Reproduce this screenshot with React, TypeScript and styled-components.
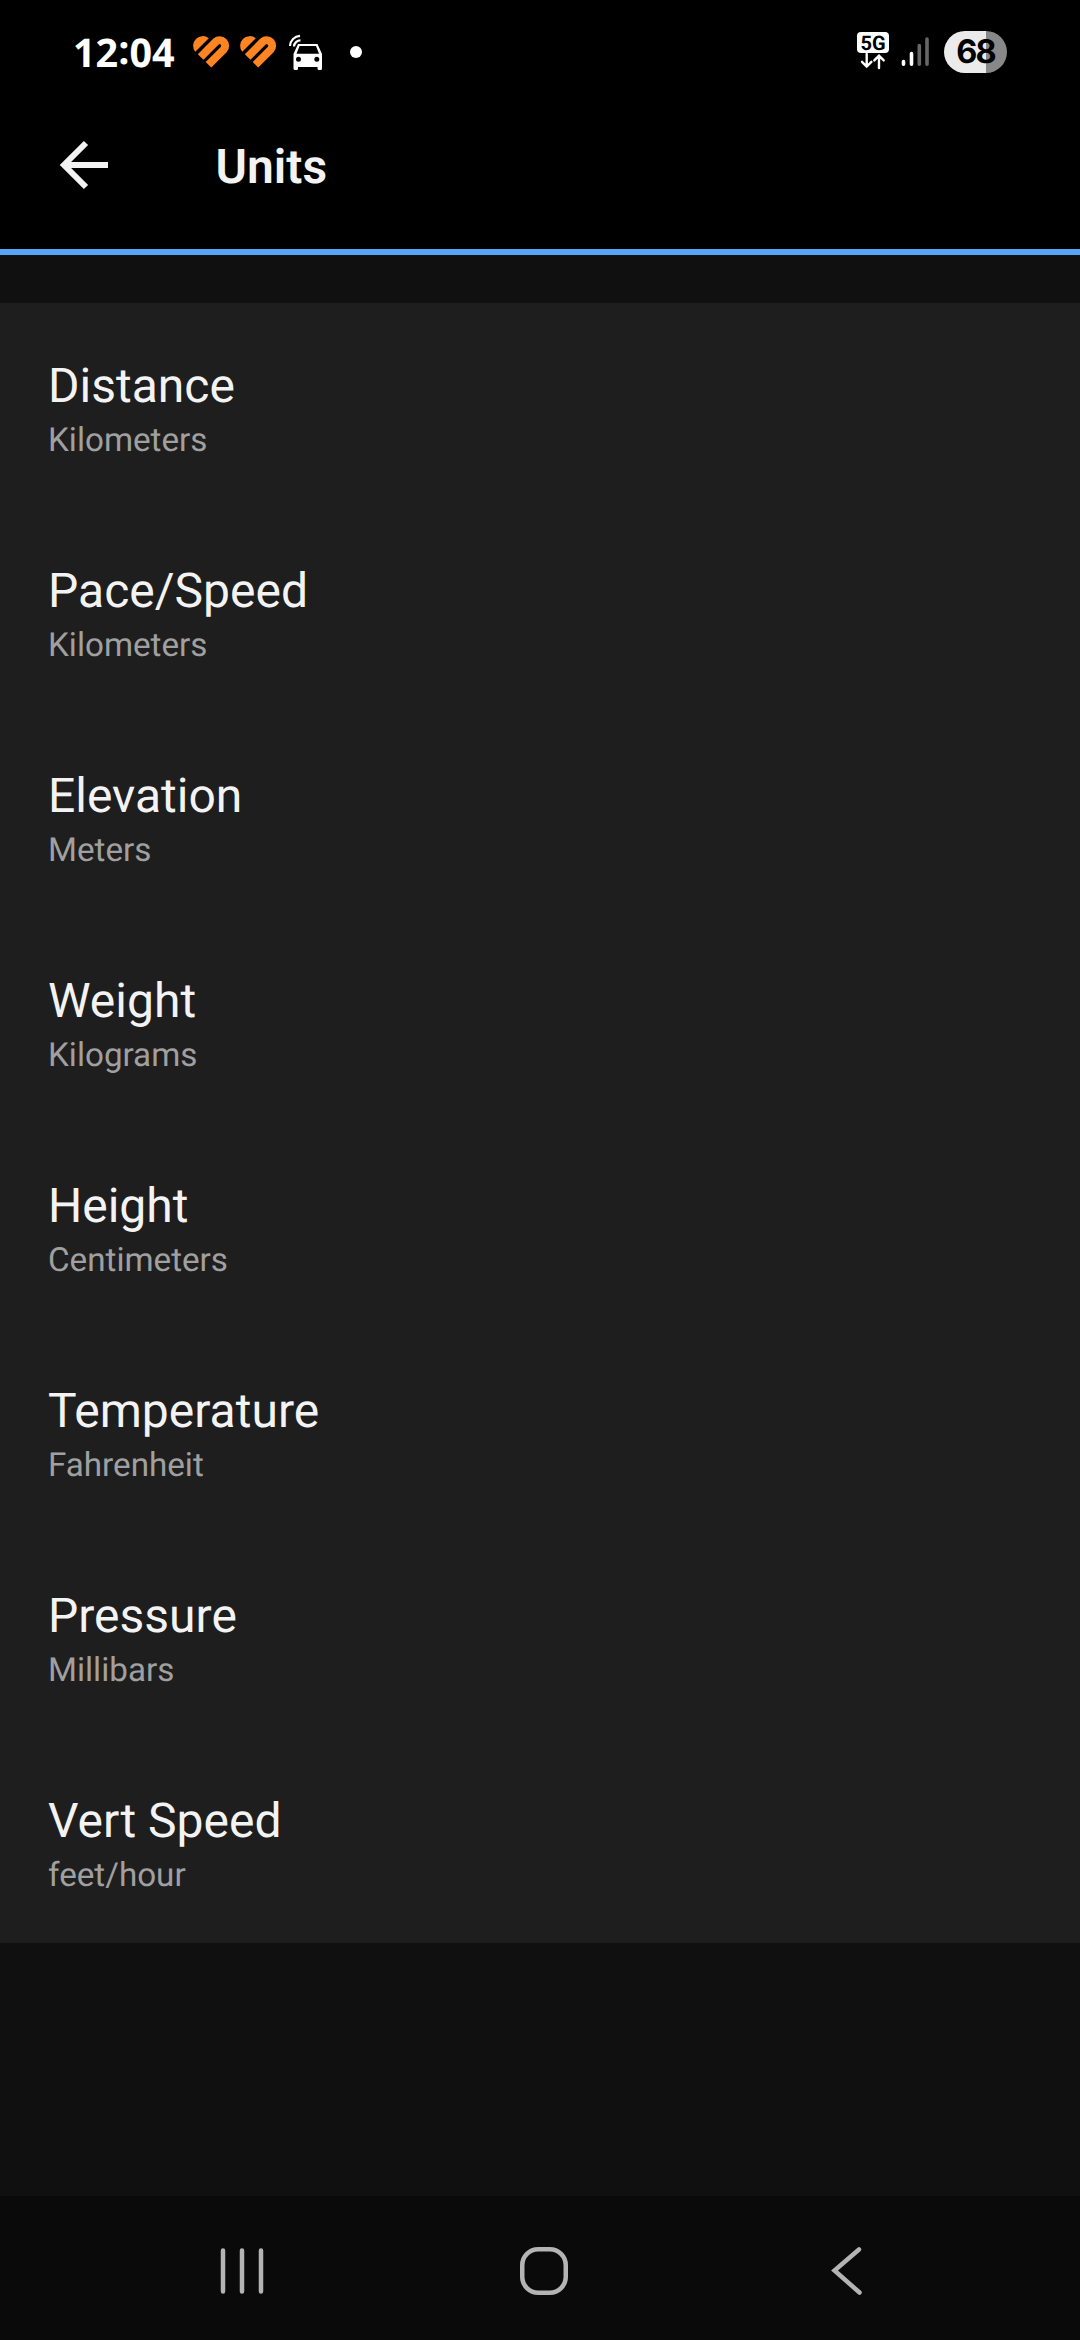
import React from 'react';
import styled, { createGlobalStyle } from 'styled-components';

const GlobalStyle = createGlobalStyle`
  * { box-sizing: border-box; }
  body { margin: 0; background: #101010; text-rendering: geometricPrecision; }
`;

const Screen = styled.div`
  display: flex;
  flex-direction: column;
  width: 1080px;
  height: 2340px;
  background: #101010;
  font-family: Roboto, sans-serif;
`;

const StatusBar = styled.div`
  display: flex;
  align-items: center;
  justify-content: space-between;
  height: 104px;
  padding: 0 73px;
  background: #000;
`;

const StatusGroup = styled.div`
  display: flex;
  align-items: center;
`;

const Clock = styled.span`
  width: 120px;
  font: 700 39.5px/54px 'Open Sans', 'Noto Sans', sans-serif;
  color: #fff;
`;

const Colon = styled.span`
  line-height: 1;
  vertical-align: 3px;
`;

const Glyph = styled.svg<{ $gap?: number }>`
  display: block;
  flex: none;
  overflow: visible;
  margin-left: ${(p) => p.$gap ?? 0}px;
`;

const Dot = styled.span`
  width: 12px;
  height: 12px;
  margin-left: 27px;
  border-radius: 50%;
  background: #fff;
`;

const Network = styled.div`
  display: flex;
  flex-direction: column;
  align-items: center;
  width: 32px;
  height: 42px;
`;

const NetworkLabel = styled.span`
  width: 32px;
  height: 21px;
  margin-top: 1px;
  border-radius: 4px;
  background: #fff;
  color: #000;
  font: 700 20px/22px Roboto, sans-serif;
  text-align: center;
`;

const Battery = styled.div`
  width: 63px;
  height: 42px;
  margin-left: 15px;
  border-radius: 21px;
  background: linear-gradient(to right, #ebebeb 42px, #888 42px);
  color: #000;
  font: 700 32.5px/41px Inter, sans-serif;
  letter-spacing: -1.8px;
  text-align: center;
`;

const AppBar = styled.header`
  display: flex;
  align-items: center;
  height: 151px;
  padding: 0 60px 23px;
  border-bottom: 6px solid #57a5f7;
  background: #000;
`;

const Title = styled.h1`
  margin: 3px 0 0 107.5px;
  font-size: 48px;
  font-weight: 600;
  line-height: 56px;
  color: #f3f3f3;
`;

const List = styled.main`
  display: flex;
  flex-direction: column;
  margin-top: 48px;
  background: #1e1e1e;
`;

const Row = styled.div`
  display: flex;
  flex-direction: column;
  height: 205px;
  padding: 55px 48px 0;
`;

const RowName = styled.span`
  font-size: 48px;
  line-height: 56px;
  color: #f3f3f3;
`;

const RowValue = styled.span`
  margin-top: 7px;
  font-size: 33.2px;
  line-height: 40px;
  color: #a0a0a0;
`;

const NavBar = styled.nav`
  display: flex;
  align-items: center;
  height: 144px;
  margin-top: auto;
  padding: 6px 0 0 220px;
  background: #0a0a0a;
`;

const units = [
  ['Distance', 'Kilometers'],
  ['Pace/Speed', 'Kilometers'],
  ['Elevation', 'Meters'],
  ['Weight', 'Kilograms'],
  ['Height', 'Centimeters'],
  ['Temperature', 'Fahrenheit'],
  ['Pressure', 'Millibars'],
  ['Vert Speed', 'feet/hour'],
];

const Heart = ({ gap }: { gap: number }) => (
  <Glyph $gap={gap} width="37" height="32" viewBox="0 0 37 32">
    <path d="M15.750 2.250A9.600 9.600 0 0 0 2.250 15.750Z" fill="#ff8522" />
    <path
      d="M7.630 20.930L22.880 5.680A5.550 5.550 0 0 1 30.720 13.520L15.470 28.770"
      fill="none"
      stroke="#ff8522"
      strokeWidth="7.9"
    />
  </Glyph>
);

const Car = () => (
  <Glyph $gap={12} width="34" height="37" viewBox="0 0 34 37">
    <g fill="none" stroke="#fff" strokeWidth="2.2">
      <path d="M1 12A10.5 10.5 0 0 1 11 1.8" />
      <path d="M5 12.500A6.500 6.500 0 0 1 11.500 6.300" />
    </g>
    <path
      fill="#fff"
      fillRule="evenodd"
      d="M9 10H28.500L33 20V34.500Q33 36 31.500 36H30Q28.500 36 28.500 34.500V33H9V34.500Q9 36 7.500 36H6Q4.500 36 4.500 34.500V20ZM10.500 12L7.500 19.700H30L27 12ZM9.500 22.800A2.500 2.500 0 1 0 9.500 27.800A2.500 2.500 0 1 0 9.500 22.800ZM27.800 22.800A2.500 2.500 0 1 0 27.800 27.800A2.500 2.500 0 1 0 27.800 22.800Z"
    />
  </Glyph>
);

export default function App() {
  return (
    <Screen>
      <GlobalStyle />
      <StatusBar>
        <StatusGroup>
          <Clock>
            12<Colon>:</Colon>04
          </Clock>
          <Heart gap={0} />
          <Heart gap={10} />
          <Car />
          <Dot />
        </StatusGroup>
        <StatusGroup>
          <Network>
            <NetworkLabel>5G</NetworkLabel>
            <Glyph width="24" height="15" viewBox="0 0 24 15">
              <path
                d="M5.700 1V13.500M1 8.800L5.700 13.500L10.400 8.800M18 15V2.700M13.300 7.400L18 2.700L22.700 7.400"
                fill="none"
                stroke="#fff"
                strokeWidth="2.4"
                strokeLinecap="round"
              />
            </Glyph>
          </Network>
          <Glyph $gap={12} width="28" height="30" viewBox="0 0 28 30">
            <g strokeWidth="3.600" strokeLinecap="round">
              <path d="M2.500 24.500V27.200M10.500 16.500V27.200" stroke="#fff" />
              <path d="M18.300 8.500V27.200M26 2V27.200" stroke="#666" />
            </g>
          </Glyph>
          <Battery>68</Battery>
        </StatusGroup>
      </StatusBar>
      <AppBar>
        <Glyph width="48" height="48" viewBox="0 0 48 48">
          <path d="M48 24H6M26 2L4 24L26 46" fill="none" stroke="#f3f3f3" strokeWidth="6" />
        </Glyph>
        <Title>Units</Title>
      </AppBar>
      <List>
        {units.map(([name, value]) => (
          <Row key={name}>
            <RowName>{name}</RowName>
            <RowValue>{value}</RowValue>
          </Row>
        ))}
      </List>
      <NavBar>
        <Glyph width="44" height="48" viewBox="0 0 44 48">
          <path d="M3 3.500V44.500M22 3.500V44.500M41 3.500V44.500" stroke="#b4b4b4" strokeWidth="4.500" strokeLinecap="round" />
        </Glyph>
        <Glyph $gap={256} width="48" height="48" viewBox="0 0 48 48">
          <rect x="2.250" y="2.250" width="43.500" height="43.500" rx="16" fill="none" stroke="#b4b4b4" strokeWidth="4.500" />
        </Glyph>
        <Glyph $gap={264} width="30" height="48" viewBox="0 0 30 48">
          <path d="M27 2.500L2.500 23.500L27.500 45.500" fill="none" stroke="#b4b4b4" strokeWidth="4.500" strokeLinecap="round" />
        </Glyph>
      </NavBar>
    </Screen>
  );
}
